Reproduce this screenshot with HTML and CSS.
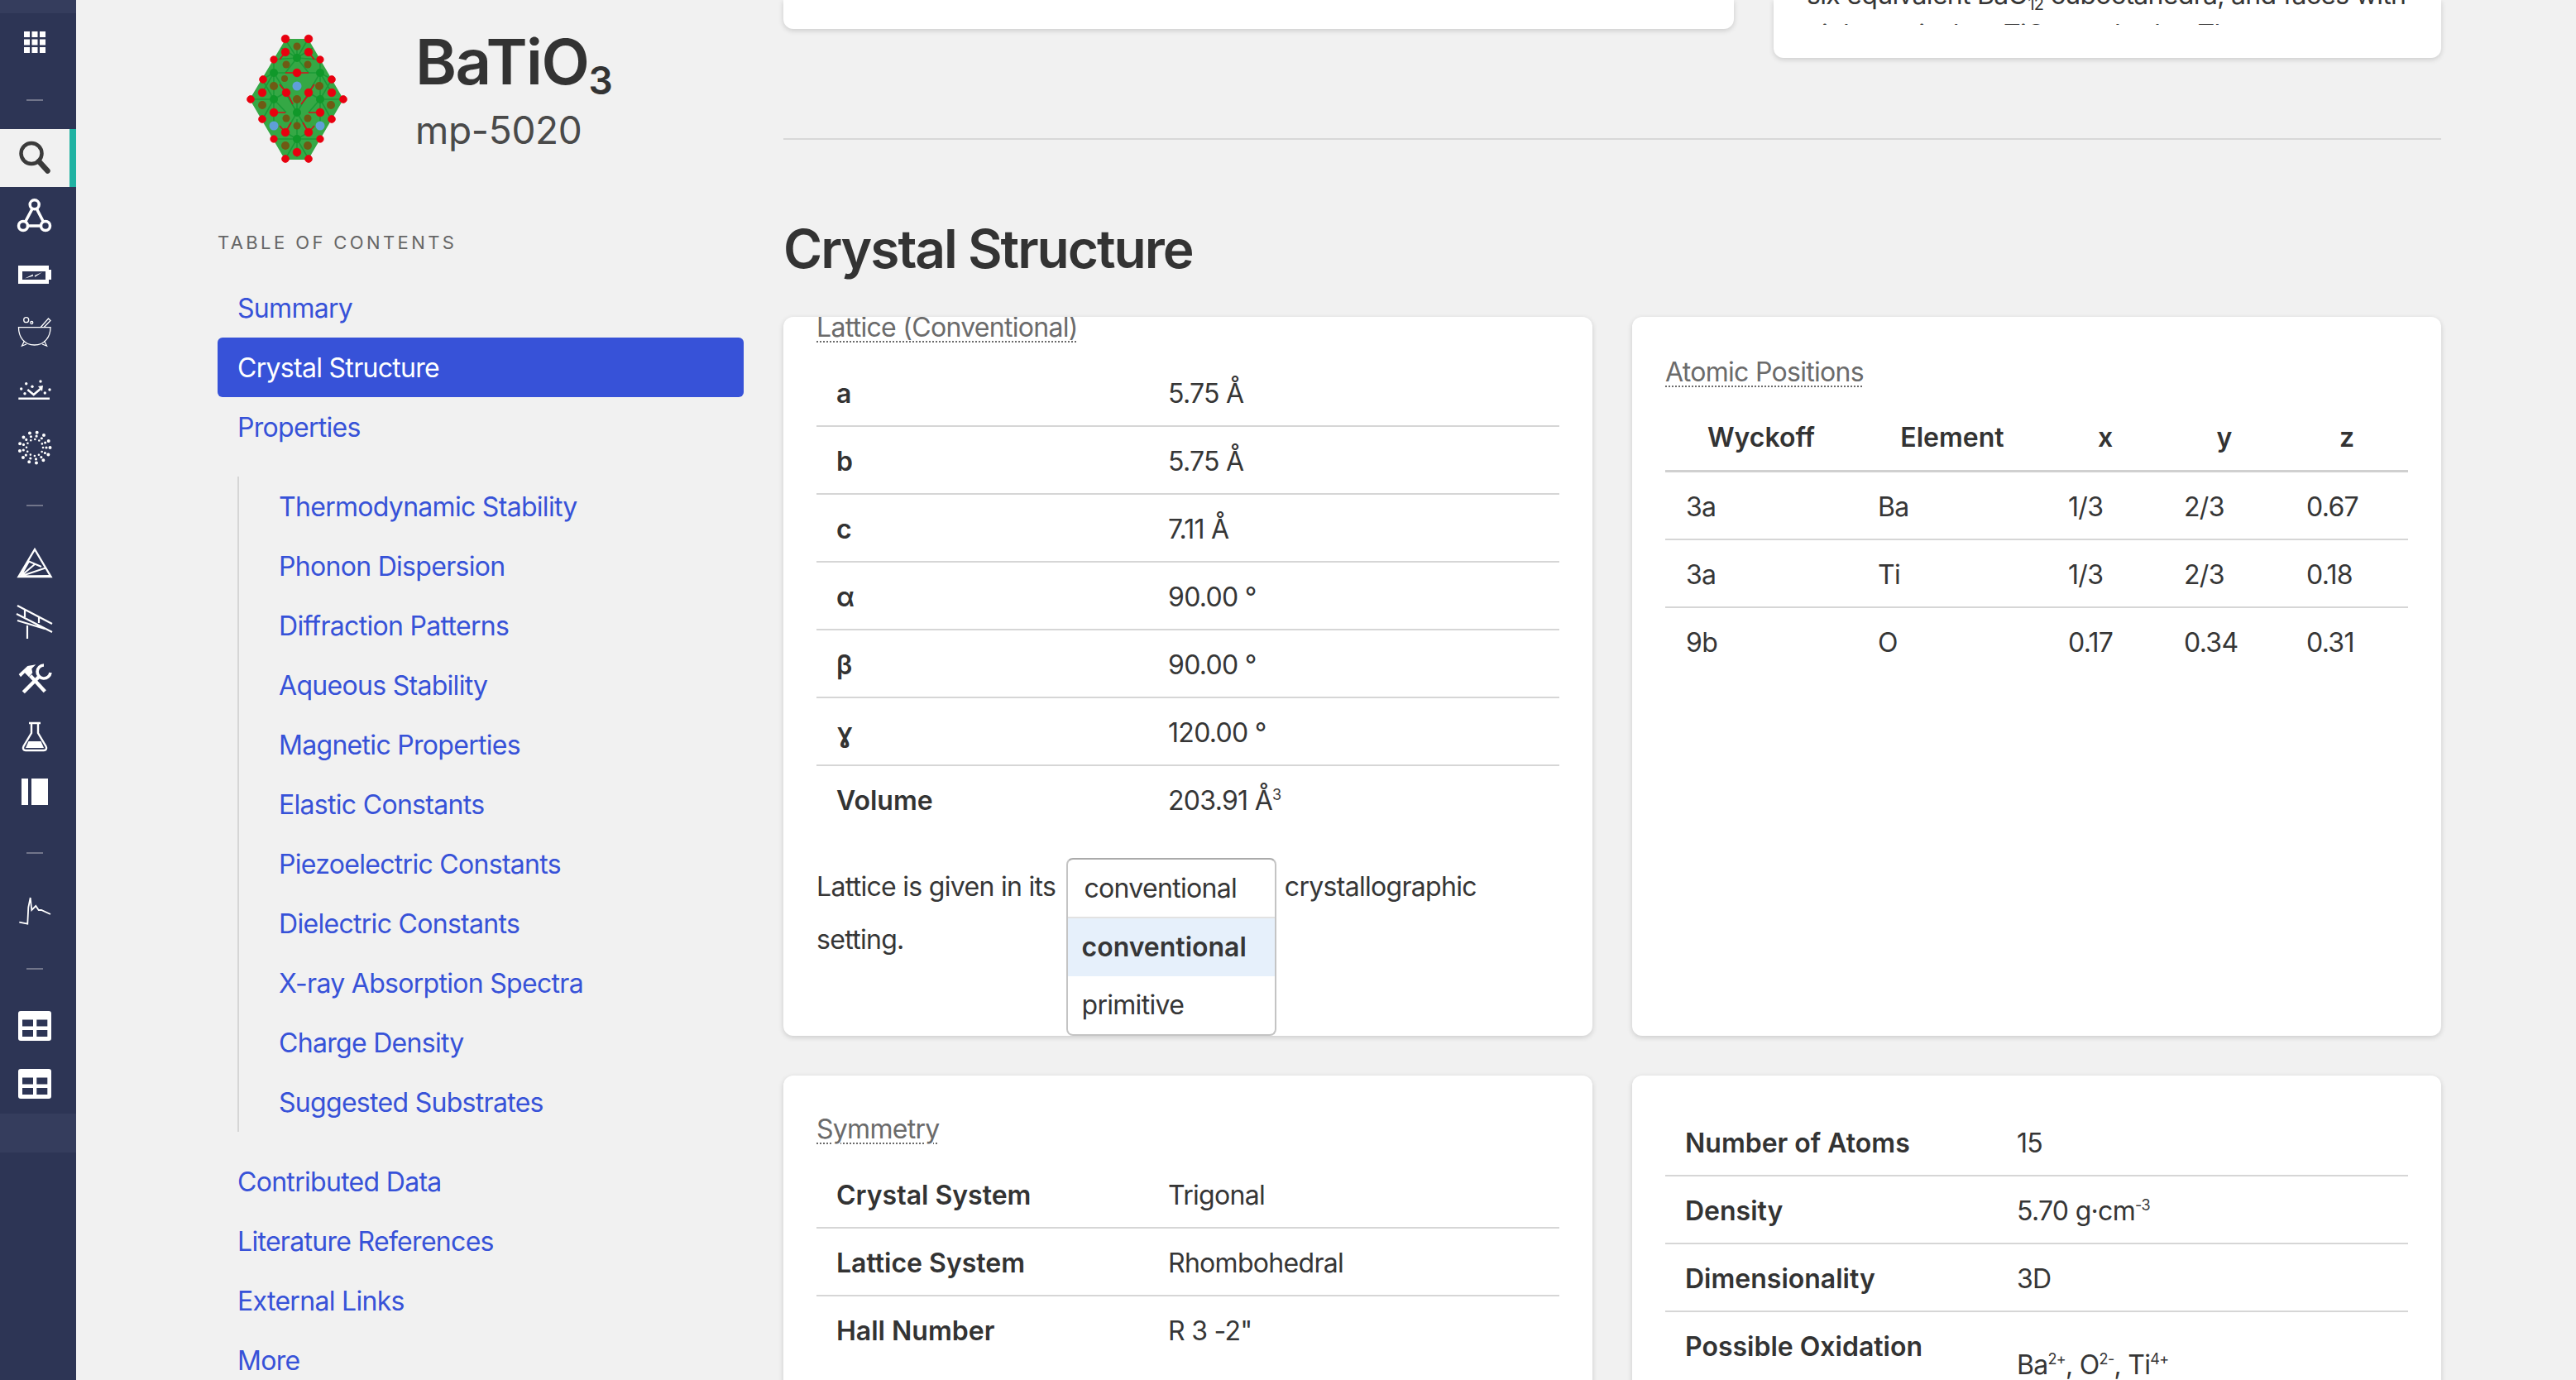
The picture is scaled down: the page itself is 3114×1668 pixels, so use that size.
FILE: index.html
```html
<!DOCTYPE html>
<html lang="en">
<head>
    <meta charset="UTF-8">
    <meta name="viewport" content="width=device-width, initial-scale=1.0">
    <title>BaTiO3 mp-5020</title>
    <link rel="stylesheet" href="styles.css">
</head>
<body>
    <nav class="rail">
        <div class="rail-strip"></div>
        <div class="rail-item">
            <svg class="icon" viewBox="0 0 44 44"><g class="solid">
                <rect x="9" y="9" width="7" height="7"/><rect x="18.5" y="9" width="7" height="7"/><rect x="28" y="9" width="7" height="7"/>
                <rect x="9" y="18.5" width="7" height="7"/><rect x="18.5" y="18.5" width="7" height="7"/><rect x="28" y="18.5" width="7" height="7"/>
                <rect x="9" y="28" width="7" height="7"/><rect x="18.5" y="28" width="7" height="7"/><rect x="28" y="28" width="7" height="7"/>
            </g></svg>
        </div>
        <div class="rail-item"><span class="rail-dash"></span></div>
        <div class="rail-item rail-active">
            <svg class="icon" viewBox="0 0 44 44"><g class="line-dark">
                <circle cx="18" cy="16.5" r="12.5" stroke-width="4.5"/>
                <path d="M27 26 L37.5 37.5" stroke-width="6.5" stroke-linecap="round"/>
            </g></svg>
        </div>
        <div class="rail-item">
            <svg class="icon" viewBox="0 0 44 44"><g class="line" stroke-width="3.5">
                <path d="M21.7 8.3 L8 34 H35 Z"/>
                <circle class="hole" cx="21.7" cy="8.3" r="5.5"/>
                <circle class="hole" cx="8" cy="34" r="5.5"/>
                <circle class="hole" cx="35" cy="34" r="5.5"/>
            </g></svg>
        </div>
        <div class="rail-item">
            <svg class="icon" viewBox="0 0 44 44">
                <rect class="solid" x="2" y="12" width="37" height="22"/>
                <rect class="solid" x="39" y="17" width="3" height="12"/>
                <rect class="cut" x="7" y="19" width="28" height="10"/>
                <path class="solid" d="M10 27.5 L20 22.5 L19.5 25 L31 20 L22 26 L22.3 24 Z"/>
            </svg>
        </div>
        <div class="rail-item">
            <svg class="icon" viewBox="0 0 44 44"><g class="line" stroke-width="1.3">
                <path d="M2.5 16.7 H41 C41 28 34 38 21.7 38 C9 38 2.5 28 2.5 16.7 Z"/>
                <path d="M9.5 33 L6.5 39 L12 37 M33.5 33 L36.5 39 L31 37"/>
                <path d="M29 16.7 L38.5 6 L41 8.5 L33 16.7"/>
                <circle cx="11.7" cy="7.7" r="3"/>
                <circle cx="18.3" cy="11" r="1.5"/>
            </g></svg>
        </div>
        <div class="rail-item">
            <svg class="icon" viewBox="0 0 44 44">
                <g class="solid">
                    <circle cx="5.7" cy="21" r="1.7"/><circle cx="11.7" cy="14.7" r="1.7"/><circle cx="19" cy="18.3" r="1.7"/>
                    <circle cx="29" cy="12" r="1.7"/><circle cx="40" cy="22" r="1.7"/><circle cx="34.3" cy="26" r="1.7"/>
                    <circle cx="10" cy="26.7" r="1.7"/>
                    <path d="M26 18 L32 17 L31 24 Z"/>
                </g>
                <path class="line" stroke-width="2.5" d="M13.3 22 L20.7 28 L29.5 20.5 M2.3 32.7 H40"/>
            </svg>
        </div>
        <div class="rail-item">
            <svg class="icon" viewBox="0 0 44 44"><g class="dots">
                <circle cx="22" cy="22" r="18.5" stroke-width="4" stroke-dasharray="0 8.94"/>
                <circle cx="22" cy="22" r="14" stroke-width="3.2" stroke-dasharray="0 6.77"/>
                <circle cx="22" cy="22" r="10" stroke-width="2.6" stroke-dasharray="0 5.24"/>
            </g></svg>
        </div>
        <div class="rail-item"><span class="rail-dash"></span></div>
        <div class="rail-item">
            <svg class="icon" viewBox="0 0 44 44"><g class="line" stroke-width="2">
                <path stroke-width="2.4" d="M22 5 L41.5 38 H2.5 Z"/>
                <path d="M5 37.5 L15 19.5 L30 26 M5 37.5 L22 23 M5 37.5 L35 27.5 M5 37.5 L40 37"/>
            </g></svg>
        </div>
        <div class="rail-item">
            <svg class="icon" viewBox="0 0 44 44"><g class="line" stroke-width="2.2">
                <path d="M1 3 L43 25 M0 13 L43 35 M1 21 L34 31 M13 27 V43 M10 8 V17 M27 17 V24"/>
            </g></svg>
        </div>
        <div class="rail-item">
            <svg class="icon" viewBox="0 0 44 44">
                <path class="solid" d="M2.7 16 L13.3 6 L23.3 4.3 L18.3 9.3 L19.3 14.3 L15 19.3 L10 14.3 L5 19.3 Z"/>
                <g class="line" stroke-width="4.4">
                    <path d="M16.7 17.7 L34.3 36.7 M8.3 37.7 L28.3 17.7"/>
                    <path stroke-width="3.6" d="M33 5 A8 8 0 1 0 41 14"/>
                </g>
            </svg>
        </div>
        <div class="rail-item">
            <svg class="icon" viewBox="0 0 44 44">
                <path class="line" stroke-width="2.4" d="M15 5 H29 M18 5 V17 L8.5 33 C7 36 8.5 38 11 38 H33 C35.5 38 37 36 35.5 33 L26 17 V5"/>
                <path class="solid" d="M14.5 27 H29.5 L33 35 H11 Z"/>
            </svg>
        </div>
        <div class="rail-item">
            <svg class="icon" viewBox="0 0 44 44">
                <rect class="solid" x="6" y="2" width="8" height="32"/>
                <rect class="solid" x="18" y="2" width="20" height="32"/>
            </svg>
        </div>
        <div class="rail-item"><span class="rail-dash"></span></div>
        <div class="rail-item">
            <svg class="icon" viewBox="0 0 44 44">
                <path class="line" stroke-width="1.8" d="M3.3 35.7 L13.3 37.7 L14.3 17.7 L16.7 6 L18.3 21 L23.3 16 L26.7 21 L30 21 L41 26"/>
            </svg>
        </div>
        <div class="rail-item"><span class="rail-dash"></span></div>
        <div class="rail-item">
            <svg class="icon" viewBox="0 0 44 44">
                <rect class="solid" x="2" y="3" width="40" height="36" rx="3"/>
                <rect class="cut" x="7" y="13.5" width="13" height="8"/><rect class="cut" x="24.3" y="13.5" width="13" height="8"/>
                <rect class="cut" x="7" y="26" width="13" height="8"/><rect class="cut" x="24.3" y="26" width="13" height="8"/>
            </svg>
        </div>
        <div class="rail-item">
            <svg class="icon" viewBox="0 0 44 44">
                <rect class="solid" x="2" y="3" width="40" height="36" rx="3"/>
                <rect class="cut" x="7" y="13.5" width="13" height="8"/><rect class="cut" x="24.3" y="13.5" width="13" height="8"/>
                <rect class="cut" x="7" y="26" width="13" height="8"/><rect class="cut" x="24.3" y="26" width="13" height="8"/>
            </svg>
        </div>
        <div class="rail-strip rail-strip-low"></div>
    </nav>

    <aside class="toc">
        <header class="material">
            <svg class="structure" viewBox="0 0 200 200">
                <polygon class="poly" points="76,28 102,28 144,100 102,172 75,172 33,100"/>
                <g class="bond-green">
                    <path d="M89 50 L75 28 M89 50 L102 28 M89 50 L75 68 M89 50 L103 68 M89 50 L60 52 M89 50 L117 52 M89 50 V36 M89 50 L70 38 M89 50 L108 38"/>
                    <path d="M61 100 L33 100 M61 100 L47 76 M61 100 L47 125 M61 100 L75 92 M61 100 L76 116 M61 100 V72 M61 100 V128"/>
                    <path d="M117 100 L145 100 M117 100 L131 76 M117 100 L131 125 M117 100 L103 92 M117 100 L103 116 M117 100 V72 M117 100 V128"/>
                    <path d="M89 148 L75 172 M89 148 L103 172 M89 148 L75 140 M89 148 L103 140 M89 148 L61 148 M89 148 L117 148 M89 148 V124 M89 148 V170"/>
                    <path d="M61 68 L47 76 M61 68 L75 68 M61 68 L61 52 M61 68 L47 92 M61 68 L76 92 M117 68 L131 76 M117 68 L103 68 M117 68 L117 52 M117 68 L131 92 M117 68 L103 92"/>
                    <path d="M89 116 L75 92 M89 116 L103 92 M89 116 L75 140 M89 116 L103 140 M89 116 V96"/>
                </g>
                <g class="brown">
                    <circle cx="89" cy="36" r="4.5"/><circle cx="76" cy="58" r="4.5"/><circle cx="102" cy="58" r="4.5"/>
                    <circle cx="74" cy="75" r="4"/><circle cx="61" cy="84" r="5"/><circle cx="116" cy="84" r="5"/><circle cx="47" cy="107" r="5"/>
                    <circle cx="130" cy="107" r="5"/><circle cx="89" cy="100" r="5"/><circle cx="76" cy="123" r="4.5"/>
                    <circle cx="102" cy="123" r="4.5"/><circle cx="89" cy="132" r="4.5"/><circle cx="75" cy="156" r="5"/>
                    <circle cx="102" cy="156" r="5"/>
                </g>
                <g class="green">
                    <circle cx="89" cy="50" r="5"/><circle cx="61" cy="68" r="5"/><circle cx="117" cy="68" r="5"/>
                    <circle cx="61" cy="100" r="5"/><circle cx="117" cy="100" r="5"/><circle cx="89" cy="116" r="5"/>
                    <circle cx="89" cy="148" r="5"/>
                </g>
                <g class="blue">
                    <circle cx="89" cy="84" r="5.5"/><circle cx="61" cy="132" r="5.5"/><circle cx="117" cy="132" r="5.5"/>
                </g>
                <g class="bond-red">
                    <path d="M75 68 H103 M61 116 H75 M103 116 H117 M68 52 L75 43 M110 52 L103 43"/>
                    <path d="M68 82 L76 92 M110 82 L103 92 M79 96 L84 106 M102 96 L94 106"/>
                    <path d="M75 140 L82 128 M103 140 L96 128 M68 132 L75 140 M110 132 L103 140"/>
                </g>
                <g class="red">
                    <circle cx="75" cy="27" r="4.8"/><circle cx="103" cy="27" r="4.8"/><circle cx="75" cy="43" r="4.8"/>
                    <circle cx="103" cy="43" r="4.8"/><circle cx="61" cy="52" r="4.2"/><circle cx="117" cy="52" r="4.2"/>
                    <circle cx="89" cy="68" r="4.8"/><circle cx="48" cy="76" r="4.4"/><circle cx="131" cy="76" r="4.4"/>
                    <circle cx="47" cy="92" r="4.8"/><circle cx="76" cy="92" r="4.8"/><circle cx="103" cy="92" r="4.8"/>
                    <circle cx="131" cy="92" r="4.8"/><circle cx="33" cy="100" r="4.4"/><circle cx="145" cy="100" r="4.4"/>
                    <circle cx="61" cy="116" r="4.8"/><circle cx="117" cy="116" r="4.8"/><circle cx="47" cy="124" r="4.4"/>
                    <circle cx="131" cy="124" r="4.4"/><circle cx="75" cy="140" r="4.8"/><circle cx="103" cy="140" r="4.8"/>
                    <circle cx="61" cy="148" r="4.2"/><circle cx="117" cy="148" r="4.2"/><circle cx="89" cy="164" r="4.8"/>
                    <circle cx="75" cy="172" r="4.4"/><circle cx="103" cy="172" r="4.4"/>
                </g>
            </svg>
            <div class="material-name">
                <h1>BaTiO<sub>3</sub></h1>
                <p>mp-5020</p>
            </div>
        </header>

        <p class="toc-label">TABLE OF CONTENTS</p>
        <ul class="toc-list">
            <li><a>Summary</a></li>
            <li><a class="toc-current">Crystal Structure</a></li>
            <li><a>Properties</a></li>
        </ul>
        <ul class="toc-list toc-sub">
            <li><a>Thermodynamic Stability</a></li>
            <li><a>Phonon Dispersion</a></li>
            <li><a>Diffraction Patterns</a></li>
            <li><a>Aqueous Stability</a></li>
            <li><a>Magnetic Properties</a></li>
            <li><a>Elastic Constants</a></li>
            <li><a>Piezoelectric Constants</a></li>
            <li><a>Dielectric Constants</a></li>
            <li><a>X-ray Absorption Spectra</a></li>
            <li><a>Charge Density</a></li>
            <li><a>Suggested Substrates</a></li>
        </ul>
        <ul class="toc-list">
            <li><a>Contributed Data</a></li>
            <li><a>Literature References</a></li>
            <li><a>External Links</a></li>
            <li><a>More</a></li>
        </ul>
    </aside>

    <main class="content">
        <div class="summary-row">
            <div class="card summary-left"></div>
            <div class="card summary-right">
                <div class="summary-clip">
                    <p>six equivalent BaO<sub>12</sub> cuboctahedra, and faces with eight equivalent TiO<sub>6</sub> octahedra. The</p>
                </div>
            </div>
        </div>
        <hr class="divider">
        <h2 class="section-title">Crystal Structure</h2>

        <div class="card-grid">
            <section class="card card-padded card-scrolled">
                <h3 class="card-title">Lattice (Conventional)</h3>
                <table class="props">
                    <tr><th>a</th><td>5.75 Å</td></tr>
                    <tr><th>b</th><td>5.75 Å</td></tr>
                    <tr><th>c</th><td>7.11 Å</td></tr>
                    <tr><th>α</th><td>90.00 °</td></tr>
                    <tr><th>β</th><td>90.00 °</td></tr>
                    <tr><th>ɣ</th><td>120.00 °</td></tr>
                    <tr><th>Volume</th><td>203.91 Å<sup>3</sup></td></tr>
                </table>
                <p class="lattice-note">Lattice is given in its <span class="select"><span class="select-menu">
                    <span class="select-value">conventional</span>
                    <span class="select-option select-option-on">conventional</span>
                    <span class="select-option">primitive</span>
                </span></span> crystallographic setting.</p>
            </section>

            <section class="card card-padded">
                <h3 class="card-title">Atomic Positions</h3>
                <table class="positions">
                    <thead>
                        <tr><th class="col-w">Wyckoff</th><th class="col-e">Element</th><th class="col-x">x</th><th class="col-n">y</th><th class="col-n">z</th></tr>
                    </thead>
                    <tbody>
                        <tr><td>3a</td><td>Ba</td><td>1/3</td><td>2/3</td><td>0.67</td></tr>
                        <tr><td>3a</td><td>Ti</td><td>1/3</td><td>2/3</td><td>0.18</td></tr>
                        <tr><td>9b</td><td>O</td><td>0.17</td><td>0.34</td><td>0.31</td></tr>
                    </tbody>
                </table>
            </section>

            <section class="card card-padded card-compact">
                <h3 class="card-title">Symmetry</h3>
                <table class="props">
                    <tr><th>Crystal System</th><td>Trigonal</td></tr>
                    <tr><th>Lattice System</th><td>Rhombohedral</td></tr>
                    <tr><th>Hall Number</th><td>R 3 -2"</td></tr>
                </table>
            </section>

            <section class="card card-padded card-untitled">
                <table class="props">
                    <tr><th>Number of Atoms</th><td>15</td></tr>
                    <tr><th>Density</th><td>5.70 g·cm<sup>-3</sup></td></tr>
                    <tr><th>Dimensionality</th><td>3D</td></tr>
                    <tr><th>Possible Oxidation States</th><td class="cell-raised">Ba<sup>2+</sup>, O<sup>2-</sup>, Ti<sup>4+</sup></td></tr>
                </table>
            </section>
        </div>
    </main>
</body>
</html>
```

FILE: styles.css
```css
* { box-sizing: border-box; }
html, body { margin: 0; height: 1668px; overflow: hidden; }
body {
    display: flex;
    background: #f1f1f1;
    color: #363636;
    font-family: Inter, "Liberation Sans", sans-serif;
    font-size: 32px;
    line-height: 64px;
    letter-spacing: -0.7px;
}

/* icon rail */
.rail { width: 92px; flex: none; height: 1668px; background: #2d3555; }
.rail-strip { height: 16px; background: #353d5d; }
.rail-strip-low { height: 47px; }
.rail-item {
    height: 70px;
    display: flex;
    align-items: center;
    justify-content: center;
    border-right: 8px solid transparent;
}
.rail-active { background: #f1f1f1; border-right-color: #20b2a2; }
.rail-dash { width: 20px; height: 2px; background: #71758a; }
.icon { width: 44px; height: 44px; display: block; overflow: visible; }
.solid { fill: #fff; }
.cut { fill: #2d3555; }
.line { fill: none; stroke: #fff; }
.line .hole { fill: #2d3555; }
.line-dark { fill: none; stroke: #3b3b3b; }
.dots { fill: none; stroke: #fff; stroke-linecap: round; }

/* table of contents */
.toc { width: 855px; flex: none; padding: 20px 48px 0 171px; }
.material { display: flex; gap: 32px; height: 200px; padding-left: 7px; }
.structure { width: 200px; height: 200px; flex: none; filter: blur(0.6px); }
.poly { fill: #35a845; stroke: #35a845; stroke-width: 2; stroke-linejoin: round; }
.brown { fill: #6f5a14; }
.green { fill: #10982a; }
.blue { fill: #5f9fd8; }
.red { fill: #e8000f; stroke: #e8000f; stroke-width: 0.8; }
.bond-green { stroke: #1a9a36; stroke-width: 1.6; fill: none; }
.bond-red { stroke: #d3101a; stroke-width: 1.6; fill: none; }
.material-name h1 {
    margin: 16px 0 0;
    font-size: 76px;
    line-height: 76px;
    font-weight: 600;
    color: #333;
    letter-spacing: -1.5px;
}
.material-name h1 sub { font-size: 46px; line-height: 0; vertical-align: -12px; }
.material-name p { margin: 17px 0 0; font-size: 46px; line-height: 56px; color: #4a4a4a; letter-spacing: -0.3px; }
.toc-label {
    margin: 57px 0 27px;
    font-size: 22px;
    line-height: 32px;
    letter-spacing: 3.4px;
    color: #666;
}
.toc-list { list-style: none; margin: 0; padding: 0; }
.toc-list a {
    display: block;
    height: 72px;
    line-height: 74px;
    padding-left: 24px;
    color: #3752d8;
    border-radius: 6px;
}
.toc-list a.toc-current { background: #3752d8; color: #fff; }
.toc-sub { margin: 24px 0 24px 24px; border-left: 2px solid #d6d6d6; padding-left: 0; }
.toc-sub a { padding-left: 48px; }

/* main column */
.content { width: 2004px; flex: none; }
.summary-row { display: flex; gap: 48px; align-items: flex-start; }
.card {
    background: #fff;
    border-radius: 12px;
    box-shadow: 0 2px 6px rgba(0, 0, 0, 0.16);
}
.summary-left { width: 1149px; height: 35px; border-radius: 0 0 12px 12px; }
.summary-right { width: 807px; height: 70px; padding: 0 40px; border-radius: 0 0 12px 12px; }
.summary-clip { height: 30px; overflow: hidden; }
.summary-clip p { margin: -30px 0 0; line-height: 48px; }
.summary-clip sub { font-size: 20px; line-height: 0; }
.divider { margin: 97px 0 0; height: 2px; border: 0; background: #d8d8d8; }
.section-title {
    margin: 92px 0 42px;
    font-size: 64px;
    line-height: 80px;
    font-weight: 600;
    color: #333;
    letter-spacing: -2px;
}

.card-grid {
    display: grid;
    grid-template-columns: 978px 978px;
    grid-template-rows: 869px 420px;
    gap: 48px;
}
.card-padded { padding: 35px 40px 0; overflow: hidden; }
.card-scrolled { padding-top: 0; }
.card-scrolled .card-title { margin-top: -19px; }
.card-compact { padding-top: 33px; }
.card-compact .card-title { margin-bottom: 6px; }
.card-untitled { padding-top: 40px; }
.card-title {
    margin: 0 0 6px;
    font-size: 32px;
    line-height: 64px;
    font-weight: 400;
    color: #6b6b6b;
    text-decoration: underline dotted #6b6b6b 2px;
    text-underline-offset: 5px;
}

table { border-collapse: collapse; width: 100%; table-layout: fixed; }
th, td { padding: 10px 25px 6px; line-height: 64px; text-align: left; vertical-align: middle; }
th { font-weight: 600; color: #333; letter-spacing: 0; }
tr { border-bottom: 2px solid #d6d6d6; }
tr:last-child { border-bottom: 0; }
sup { font-size: 18px; line-height: 0; }
.props th { width: 400px; padding-right: 0; padding-left: 24px; }
.props td.cell-raised { padding-bottom: 26px; }

.positions thead tr { border-bottom: 3px solid #d0d0d0; }
.positions th { text-align: center; padding: 9px 0 7px; }
.positions tbody tr:last-child { border-bottom: 0; }
.col-w { width: 232px; }
.col-e { width: 230px; }
.col-x { width: 140px; }
.col-n { width: 148px; }

.lattice-note { margin: 34px 0 0; }
.select { display: inline-block; position: relative; width: 254px; height: 0; margin: 0 2px 0 4px; }
.select-menu {
    position: absolute;
    top: -46px;
    left: 0;
    width: 254px;
    display: block;
    background: #fff;
    border: 2px solid #c4c4c4;
    border-top-color: #aaa;
    border-radius: 8px;
    overflow: hidden;
    z-index: 2;
}
.select-value, .select-option { display: block; height: 70px; line-height: 70px; padding-left: 17px; }
.select-value { padding-left: 20px; border-bottom: 2px solid #e2e2e2; height: 71px; }
.select-option-on { background: #e6f0fb; font-weight: 600; letter-spacing: 0; }
```
